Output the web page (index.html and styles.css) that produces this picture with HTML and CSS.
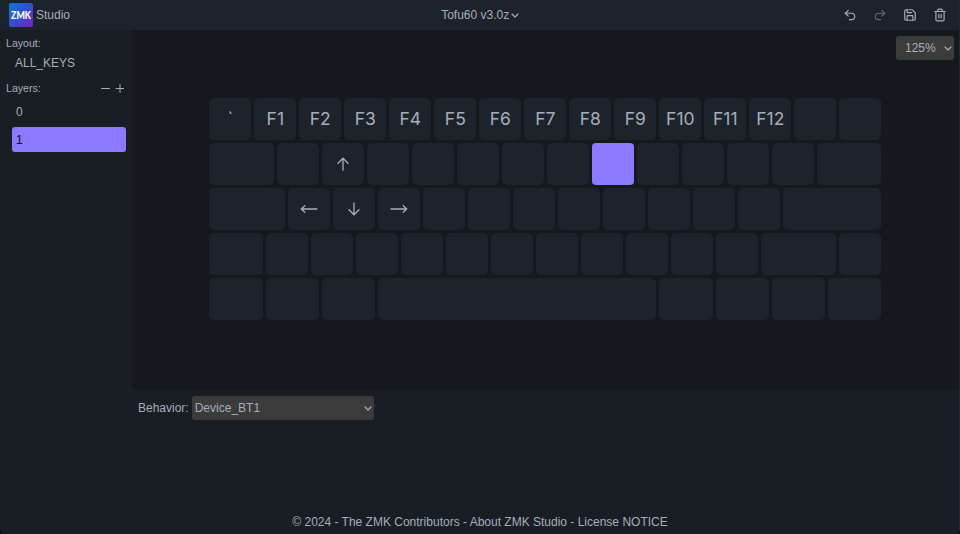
FILE: index.html
```
<!DOCTYPE html>
<html lang="en">
<head>
<meta charset="utf-8">
<title>ZMK Studio</title>
<link rel="stylesheet" href="styles.css">
</head>
<body>
<div class="app">
  <header class="header">
    <div class="brand">
      <svg class="logo" viewBox="0 0 24 24"><defs><linearGradient id="g" x1="0" y1="0" x2="1" y2="1"><stop offset="0" stop-color="#0b78d2"/><stop offset=".5" stop-color="#3350cd"/><stop offset="1" stop-color="#7a1fc4"/></linearGradient></defs><rect class="logo-tile" width="24" height="24" rx="2.200" fill="url(#g)"/><text class="logo-text" x="2" y="16" textLength="20" lengthAdjust="spacingAndGlyphs">ZMK</text></svg>
      <span>Studio</span>
    </div>
    <div class="device">Tofu60 v3.0z<svg class="chev" viewBox="0 0 8 5"><path d="M1 1l3 3 3-3"/></svg></div>
    <div class="actions">
      <svg viewBox="0 0 24 24"><path d="M9 14 4 9l5-5"/><path d="M4 9h10.500a5.500 5.500 0 0 1 0 11H11"/></svg>
      <svg class="off" viewBox="0 0 24 24"><path d="m15 14 5-5-5-5"/><path d="M20 9H9.500a5.500 5.500 0 0 0 0 11H13"/></svg>
      <svg viewBox="0 0 24 24"><path d="M15.200 3a2 2 0 0 1 1.400.6l3.800 3.800a2 2 0 0 1 .6 1.400V19a2 2 0 0 1-2 2H5a2 2 0 0 1-2-2V5a2 2 0 0 1 2-2z"/><path d="M17 21v-7a1 1 0 0 0-1-1H8a1 1 0 0 0-1 1v7M7 3v4a1 1 0 0 0 1 1h7"/></svg>
      <svg viewBox="0 0 24 24"><path d="M3 6h18M19 6v14a2 2 0 0 1-2 2H7a2 2 0 0 1-2-2V6M8 6V4a2 2 0 0 1 2-2h4a2 2 0 0 1 2 2v2M10 11v6M14 11v6"/></svg>
    </div>
  </header>
  <main class="body">
    <aside class="sidebar">
      <div class="label">Layout:</div>
      <div class="layout-name">ALL_KEYS</div>
      <div class="label layers-head"><span>Layers:</span>
        <svg viewBox="0 0 23 9"><path d="M0.500 4.500h8M15 4.500h8M19 .5v8"/></svg>
      </div>
      <div class="layer">0</div>
      <div class="layer selected">1</div>
    </aside>
    <section class="content">
      <div class="canvas">
        <div class="zoom">125%<svg class="chev" viewBox="0 0 8 5"><path d="M1 1l3 3 3-3"/></svg></div>
        <div class="keyboard">
          <div class="row legends"><i>`</i><i>F1</i><i>F2</i><i>F3</i><i>F4</i><i>F5</i><i>F6</i><i>F7</i><i>F8</i><i>F9</i><i>F10</i><i>F11</i><i>F12</i><i></i><i></i></div>
          <div class="row"><i class="u150"></i><i></i><i><svg viewBox="0 0 18 18"><path d="M9 15.200V3.500M4 8.300l5-5 5 5"/></svg></i><i></i><i></i><i></i><i></i><i></i><i class="active"></i><i></i><i></i><i></i><i></i><i class="u150"></i></div>
          <div class="row"><i class="u175"></i><i><svg viewBox="0 0 18 18"><path d="M17 9H1.300M4.800 5.700L1.300 9l3.500 3.300"/></svg></i><i><svg viewBox="0 0 18 18"><path d="M9 2.800v11.700M4 9.700l5 5 5-5"/></svg></i><i><svg viewBox="0 0 18 18"><path d="M1 9h15.700M13.200 5.700l3.500 3.300-3.500 3.300"/></svg></i><i></i><i></i><i></i><i></i><i></i><i></i><i></i><i></i><i class="u225"></i></div>
          <div class="row"><i class="u125"></i><i></i><i></i><i></i><i></i><i></i><i></i><i></i><i></i><i></i><i></i><i></i><i class="u175"></i><i></i></div>
          <div class="row"><i class="u125"></i><i class="u125"></i><i class="u125"></i><i class="u625"></i><i class="u125"></i><i class="u125"></i><i class="u125"></i><i class="u125"></i></div>
        </div>
      </div>
      <div class="behavior"><span>Behavior:</span><div class="select">Device_BT1<svg class="chev" viewBox="0 0 8 5"><path d="M1 1l3 3 3-3"/></svg></div></div>
    </section>
  </main>
  <footer class="footer">© 2024 - The ZMK Contributors - About ZMK Studio - License NOTICE</footer>
</div>
</body>
</html>
```
FILE: styles.css
```
* { box-sizing: border-box; }
body { margin: 0; background: #050608; font-family: "Liberation Sans", Arial, sans-serif; font-size: 12px; color: #a6adbb; }
svg { display: block; fill: none; stroke: currentColor; stroke-linecap: round; stroke-linejoin: round; }
.app { width: 960px; height: 534px; display: flex; flex-direction: column; background: #191e24; border-right: 1px solid #1b2a36; border-radius: 0 0 4px 4px; overflow: hidden; }
.header { height: 30px; flex: none; display: grid; grid-template-columns: 1fr auto 1fr; align-items: center; background: #1d232a; padding: 0 11.600px 0 9px; }
.brand { display: flex; align-items: center; gap: 3px; }
.logo { width: 24px; height: 24px; overflow: visible; }
.logo-tile { stroke: none; }
.logo-text { font: bold 11px Lato, sans-serif; fill: #fff; stroke: #fff; stroke-width: .2; }
.device { display: flex; align-items: center; gap: 2px; padding-left: 4px; }
.chev { width: 8px; height: 5px; stroke-width: 1.200; }
.actions { display: flex; justify-content: flex-end; gap: 16px; }
.actions svg { width: 14px; height: 14px; stroke-width: 2; }
.actions .off { opacity: .5; }
.body { flex: 1; min-height: 0; display: flex; }
.sidebar { width: 132px; flex: none; padding: 6px 6px; }
.label { font-size: 10.600px; line-height: 14px; }
.layout-name { padding-left: 9px; line-height: 14px; margin-top: 6px; }
.layers-head { display: flex; align-items: center; justify-content: space-between; margin-top: 11px; }
.layers-head svg { width: 23px; height: 9px; margin-right: 2px; stroke-width: 1; }
.layer { height: 25px; line-height: 26px; margin: 4px 0 0 6px; padding-left: 4px; border-radius: 3px; }
.layer.selected { margin-top: 3px; background: #8b7aff; color: #0d0c18; }
.content { flex: 1; display: flex; flex-direction: column; }
.canvas { height: 360px; position: relative; background: #15191e; padding: 68px 0 0 77.300px; }
.zoom { position: absolute; top: 6px; right: 5px; width: 58px; height: 24px; background: #3b3b3b; border-radius: 3px; display: flex; align-items: center; justify-content: space-between; padding: 0 2px 0 9px; }
.keyboard { display: flex; flex-direction: column; gap: 3px; }
.row { display: flex; gap: 3px; height: 42.100px; }
.row i { width: 42px; flex: none; display: flex; align-items: center; justify-content: center; background: #1d232a; border-radius: 5px; font: 17.500px Inter, sans-serif; }
.row.legends i { padding-bottom: 1px; }
.row i svg { width: 18px; height: 18px; stroke-width: 1.300; }
.row .u125 { width: 53.250px; }
.row .u150 { width: 64.500px; }
.row .u175 { width: 75.750px; }
.row .u225 { width: 98.250px; }
.row .u625 { width: 278.250px; }
.row .active { background: #8b7aff; border-radius: 4px; }
.behavior { display: flex; align-items: center; gap: 3px; padding: 6px; }
.select { width: 182px; height: 24px; background: #3b3b3b; border-radius: 3px; display: flex; align-items: center; justify-content: space-between; padding: 0 2px 0 3px; }
.footer { height: 24px; flex: none; line-height: 24px; text-align: center; padding-left: 1px; }
```
